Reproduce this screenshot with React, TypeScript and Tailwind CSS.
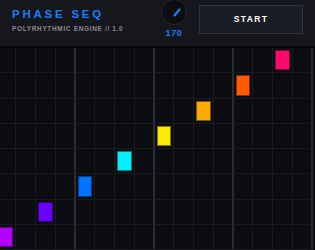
const COLS = 16
const ROWS = 8

// step index per row (row 0 is the top)
const notes: { row: number; col: number; color: string }[] = [
  { row: 0, col: 14, color: '#ff0a6c' },
  { row: 1, col: 12, color: '#ff5a00' },
  { row: 2, col: 10, color: '#ffaa00' },
  { row: 3, col: 8, color: '#ffe900' },
  { row: 4, col: 6, color: '#00f2ff' },
  { row: 5, col: 4, color: '#0073ff' },
  { row: 6, col: 2, color: '#6a00ff' },
  { row: 7, col: 0, color: '#b400ff' },
]

function Knob() {
  return (
    <div className="flex flex-col items-center -mt-[1px]">
      <svg width="26" height="26" viewBox="0 0 26 26">
        <circle cx="13" cy="13" r="12.5" fill="#0d0e12" stroke="#26282e" strokeWidth="1" />
        <line x1="13.5" y1="16.5" x2="18.5" y2="10.5" stroke="#1a7cff" strokeWidth="2.2" strokeLinecap="round" />
      </svg>
      <span className="mt-[4px] text-[9px] leading-none font-bold tracking-[0.08em] text-[#1a7cff]">170</span>
    </div>
  )
}

function Header() {
  return (
    <div className="h-[48px] flex justify-between items-start pl-3 pr-3 bg-[#16171c] border-b-2 border-[#060608]">
      <div className="pt-[9px]">
        <div className="text-[11.5px] leading-none font-bold tracking-[0.24em] text-[#1a7cff]">PHASE SEQ</div>
        <div className="mt-[5px] text-[6.5px] leading-none font-semibold tracking-[0.1em] text-[#878a93]">
          POLYRHYTHMIC ENGINE // 1.0
        </div>
      </div>
      <div className="flex items-start gap-3">
        <Knob />
        <button className="mt-[5px] w-[104px] h-[29px] flex items-center justify-center bg-[#1b1d24] border border-[#32353c] text-white text-[8.5px] font-bold tracking-[0.16em]">
          START
        </button>
      </div>
    </div>
  )
}

function Grid() {
  const cells = []
  for (let r = 0; r < ROWS; r++) {
    for (let c = 0; c < COLS; c++) {
      const note = notes.find((n) => n.row === r && n.col === c)
      const beat = c % 4 === 3
      cells.push(
        <div
          key={`${r}-${c}`}
          className={`p-[2px] border-b border-[#1a1b1f] ${
            beat ? 'border-r-2 border-r-[#2b2c30]' : 'border-r border-r-[#1a1b1f]'
          }`}
        >
          {note && (
            <div
              className="w-full h-full border border-black/50"
              style={{ backgroundColor: note.color }}
            />
          )}
        </div>
      )
    }
  }
  return (
    <div className="h-[202px] overflow-hidden">
      <div className="-ml-[3.5px] w-[316px] h-[202px] grid grid-cols-[repeat(16,19.75px)] grid-rows-[repeat(8,25.25px)]">
        {cells}
      </div>
    </div>
  )
}

export default function App() {
  return (
    <div className="w-[315px] h-[250px] overflow-hidden bg-[#0b0c0f] font-['Liberation_Sans',Arial,sans-serif]">
      <Header />
      <Grid />
    </div>
  )
}
